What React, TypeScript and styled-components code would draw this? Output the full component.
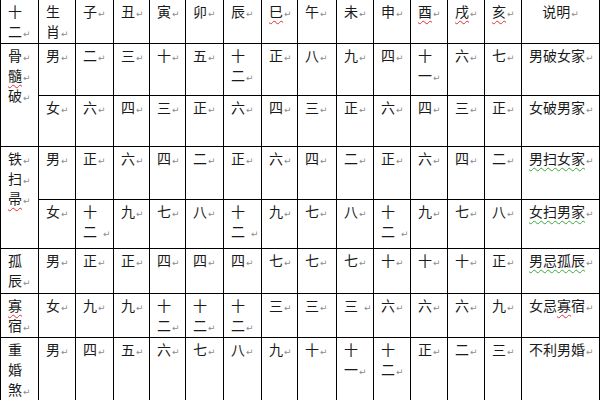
import React from 'react';
import styled, { createGlobalStyle } from 'styled-components';

const GlobalStyle = createGlobalStyle`
  html, body {
    margin: 0;
    padding: 0;
    background: #fff;
    overflow: hidden;
  }
`;

// cell widths / row heights between the 1px rules
const COLS = [37, 36, 37, 35, 35, 37, 37, 35, 38, 36, 36, 36, 36, 36, 77];
const ROWS = [43, 51, 50, 52, 48, 44, 43, 80];

const Sheet = styled.div`
  display: grid;
  grid-template-columns: ${COLS.map((c) => `${c}px`).join(' ')};
  grid-template-rows: ${ROWS.map((r) => `${r}px`).join(' ')};
  gap: 1px;
  padding: 1px;
  margin-top: -1px;
  width: 600px;
  box-sizing: border-box;
  background: #000;
  font-family: "Noto Sans CJK SC", "Noto Sans", sans-serif;
  font-size: 14px;
  line-height: 20px;
  color: #1a1a1a;
`;

const Cell = styled.div<{ $span?: number; $center?: boolean }>`
  background: #fff;
  padding: 1px 0 0 7px;
  overflow: hidden;
  grid-row: ${(p) => (p.$span ? `span ${p.$span}` : 'auto')};
  text-align: ${(p) => (p.$center ? 'center' : 'left')};
  ${(p) => (p.$center ? 'padding-right: 7px;' : '')}
`;

const Line = styled.div`
  white-space: nowrap;
  height: 20px;
`;

const Mark = styled.span`
  font-family: "DejaVu Sans", sans-serif;
  font-size: 9px;
  color: #8c8c8c;
  margin-left: 1px;
`;

const Wavy = styled.span<{ $tone: 'r' | 'g' }>`
  text-decoration: underline wavy ${(p) => (p.$tone === 'r' ? '#e0303a' : '#3aa83a')};
  text-decoration-thickness: 1px;
  text-underline-offset: 3px;
`;

const Gap = styled.span`
  display: inline-block;
  width: 5px;
`;

type Spec = { s: string; span?: number; center?: boolean };

// "/" new line, "*" paragraph mark, "_" gap, "{rX}" / "{gX}" wavy underline
const rows: Spec[][] = [
  [
    { s: '十/二*' }, { s: '生/肖*' },
    ...['子*', '丑*', '寅*', '卯*', '辰*', '{r巳}*', '午*', '未*', '申*', '{r酉}*', '{r戌}*', '{r亥}*'].map((s) => ({ s })),
    { s: '说明*', center: true },
  ],
  [
    { s: '骨*/{r髓}*/破*', span: 2 }, { s: '男*' },
    ...['二*', '三*', '十*', '五*', '十/二*', '正*', '八*', '九*', '四*', '十/一*', '六*', '七*'].map((s) => ({ s })),
    { s: '男破女家*' },
  ],
  [
    { s: '女*' },
    ...['六*', '四*', '三*', '正*', '六*', '四*', '三*', '正*', '六*', '四*', '三*', '正*'].map((s) => ({ s })),
    { s: '女破男家*' },
  ],
  [
    { s: '铁*/扫*/{r帚}*', span: 2 }, { s: '男*' },
    ...['正*', '六*', '四*', '二*', '正*', '六*', '四*', '二*', '正*', '六*', '四*', '二*'].map((s) => ({ s })),
    { s: '{g男扫女家}*' },
  ],
  [
    { s: '女*' },
    ...['十/二_*', '九*', '七*', '八*', '十/二_*', '九*', '七*', '八*', '十/二_*', '九*', '七*', '八*'].map((s) => ({ s })),
    { s: '{g女扫男家}*' },
  ],
  [
    { s: '孤/辰*' }, { s: '男*' },
    ...['正*', '正*', '四*', '四*', '四*', '七*', '七*', '七*', '十*', '十*', '十*', '正*'].map((s) => ({ s })),
    { s: '{g男忌孤辰}*' },
  ],
  [
    { s: '{r寡}/宿*' }, { s: '女*' },
    ...['九*', '九*', '十/二*', '十/二*', '十/二*', '三*', '三*', '三_*', '六*', '六*', '六*', '九*'].map((s) => ({ s })),
    { s: '女忌{r寡}宿*' },
  ],
  [
    { s: '重/婚/煞*' }, { s: '男*' },
    ...['四*', '五*', '六*', '七*', '八*', '九*', '十*', '十/一*', '十/二*', '正*', '二*', '三*'].map((s) => ({ s })),
    { s: '不利男婚*' },
  ],
];

const renderLine = (line: string) => {
  const parts: React.ReactNode[] = [];
  const re = /\{([rg])([^}]*)\}|\*|_|[^{*_]+/g;
  let m: RegExpExecArray | null;
  let i = 0;
  while ((m = re.exec(line))) {
    if (m[1]) parts.push(<Wavy key={i} $tone={m[1] as 'r' | 'g'}>{m[2]}</Wavy>);
    else if (m[0] === '*') parts.push(<Mark key={i}>↵</Mark>);
    else if (m[0] === '_') parts.push(<Gap key={i} />);
    else parts.push(<React.Fragment key={i}>{m[0]}</React.Fragment>);
    i++;
  }
  return parts;
};

export default function App() {
  return (
    <>
      <GlobalStyle />
      <Sheet>
        {rows.flat().map((c, idx) => (
          <Cell key={idx} $span={c.span} $center={c.center}>
            {c.s.split('/').map((l, j) => (
              <Line key={j}>{renderLine(l)}</Line>
            ))}
          </Cell>
        ))}
      </Sheet>
    </>
  );
}
